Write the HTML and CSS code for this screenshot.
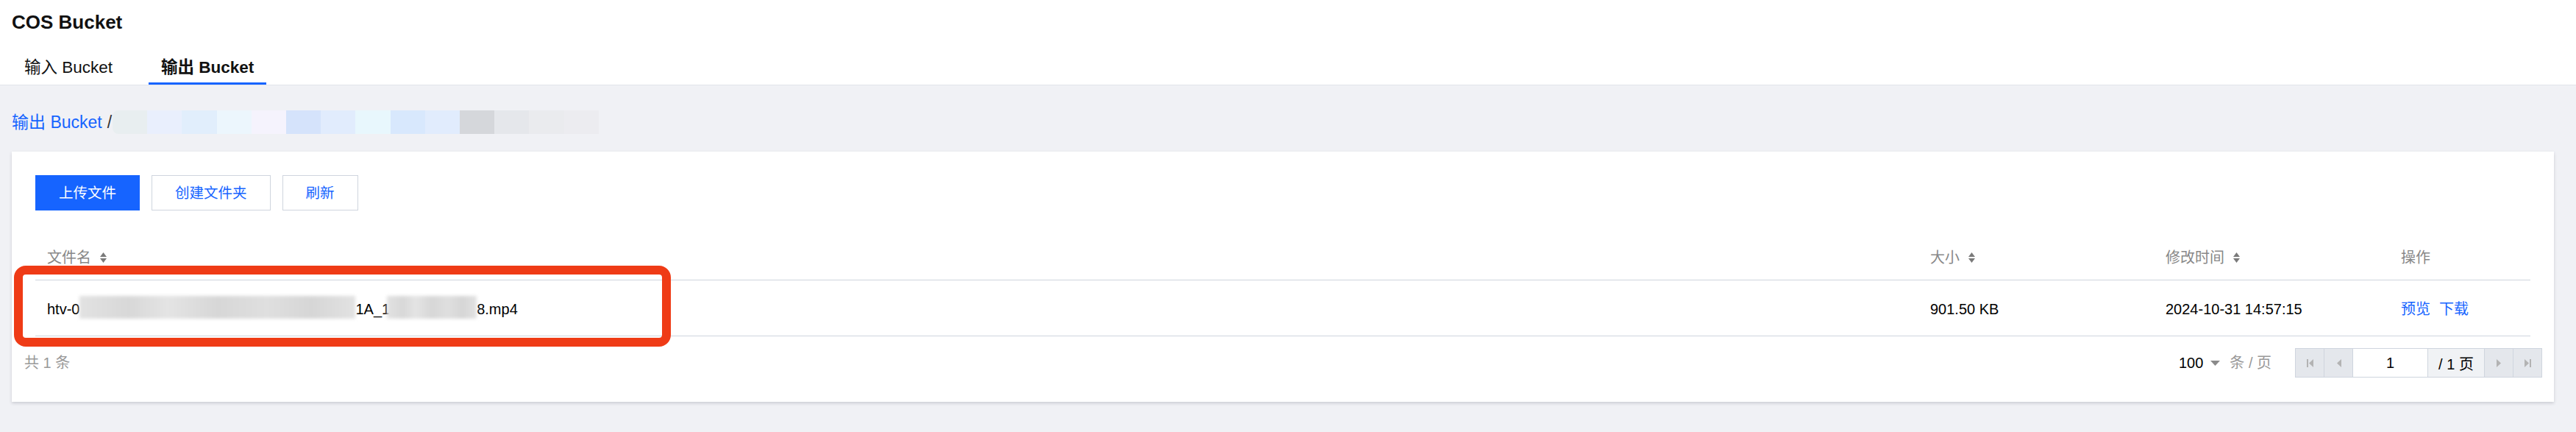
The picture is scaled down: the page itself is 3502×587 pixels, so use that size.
FILE: index.html
```html
<!DOCTYPE html>
<html lang="zh-CN">
<head>
<meta charset="utf-8">
<title>COS Bucket</title>
<link rel="stylesheet" href="styles.css">
</head>
<body>
<header class="page-header">
  <h1 class="title">COS Bucket</h1>
  <nav class="tabs">
    <a class="tab">输入 Bucket</a>
    <a class="tab tab-active">输出 Bucket</a>
  </nav>
</header>
<main class="main">
  <div class="crumb">
    <a class="crumb-link">输出 Bucket</a>
    <span class="crumb-sep">/</span>
    <span class="mosaic">
      <i class="m m1"></i><i class="m m2"></i><i class="m m3"></i><i class="m m4"></i><i class="m m5"></i><i class="m m6"></i><i class="m m7"></i><i class="m m8"></i><i class="m m9"></i><i class="m m10"></i><i class="m m11"></i><i class="m m12"></i><i class="m m13"></i><i class="m m14"></i>
    </span>
  </div>
  <section class="card">
    <div class="toolbar">
      <button class="btn btn-primary">上传文件</button>
      <button class="btn">创建文件夹</button>
      <button class="btn">刷新</button>
    </div>
    <div class="table">
      <div class="thead row-grid">
        <div class="th">文件名<svg class="sort" viewBox="0 0 9 14"><path d="M0 6L4.5 0L9 6Z M0 8L9 8L4.5 14Z"/></svg></div>
        <div class="th">大小<svg class="sort" viewBox="0 0 9 14"><path d="M0 6L4.5 0L9 6Z M0 8L9 8L4.5 14Z"/></svg></div>
        <div class="th">修改时间<svg class="sort" viewBox="0 0 9 14"><path d="M0 6L4.5 0L9 6Z M0 8L9 8L4.5 14Z"/></svg></div>
        <div class="th">操作</div>
      </div>
      <div class="tr row-grid">
        <div class="td name">htv-0<span class="redact redact-a"></span>1A_1<span class="redact redact-b"></span>8.mp4</div>
        <div class="td">901.50 KB</div>
        <div class="td">2024-10-31 14:57:15</div>
        <div class="td ops"><a class="op">预览</a><a class="op">下载</a></div>
        <div class="highlight"></div>
      </div>
    </div>
    <div class="footer">
      <span class="total">共 1 条</span>
      <div class="pager-wrap">
        <div class="page-size">
          <span>100</span>
          <svg class="caret" viewBox="0 0 13 7"><path d="M0 0H13L6.5 7Z"/></svg>
          <span class="unit">条 / 页</span>
        </div>
        <div class="pager">
          <span class="pg"><svg class="pg-ico" viewBox="0 0 9 11"><rect x="0" y="0" width="2" height="11"/><path d="M9 0V11L3 5.5Z"/></svg></span>
          <span class="pg"><svg class="pg-ico" viewBox="0 0 9 11"><path d="M8 0V11L2 5.5Z"/></svg></span>
          <span class="pg-input">1</span>
          <span class="pg-total">/ 1 页</span>
          <span class="pg"><svg class="pg-ico" viewBox="0 0 9 11"><path d="M1 0V11L7 5.5Z"/></svg></span>
          <span class="pg pg-last"><svg class="pg-ico" viewBox="0 0 9 11"><path d="M0 0V11L6 5.5Z"/><rect x="7" y="0" width="2" height="11"/></svg></span>
        </div>
      </div>
    </div>
  </section>
</main>
</body>
</html>
```

FILE: styles.css
```css
* { box-sizing: border-box; }
html, body { margin: 0; padding: 0; }
body {
  background: #f0f1f5;
  font-family: "Liberation Sans", "Noto Sans CJK SC", sans-serif;
  color: #000;
  width: 3502px;
  height: 587px;
  overflow: hidden;
}

.page-header {
  background: #fff;
  padding: 17px 0 0 16px;
  border-bottom: 1px solid #e2e4ea;
}
.title {
  margin: 0;
  font-size: 26px;
  line-height: 26px;
  font-weight: 700;
  color: #111;
}
.tabs {
  display: flex;
  gap: 32px;
  margin-top: 17px;
}
.tab {
  padding: 21px 17px 9px;
  font-size: 22.5px;
  line-height: 22px;
  color: #111;
  border-bottom: 3px solid transparent;
}
.tab-active {
  font-weight: 700;
  border-bottom-color: #1664ff;
}

.main {
  padding: 34px 30px 0 16px;
}
.crumb {
  display: flex;
  align-items: center;
  height: 32px;
  font-size: 23px;
  line-height: 23px;
  margin-bottom: 24px;
}
.crumb-link { color: #1664ff; }
.crumb-sep { margin-left: 7px; color: #333; }
.mosaic {
  display: flex;
  height: 32px;
  margin-left: 1px;
  filter: blur(0.6px);
}
.m { display: block; width: 47.2px; height: 32px; }
.m1 { background: #e8eef0; border-radius: 8px 0 0 8px; }
.m2 { background: #e9effd; }
.m3 { background: #e1eefc; }
.m4 { background: #ecf6fd; }
.m5 { background: #f5f3fd; }
.m6 { background: #d5e3fb; }
.m7 { background: #e1ecfd; }
.m8 { background: #e8f7fd; }
.m9 { background: #d8e8fd; }
.m10 { background: #e1ecfd; }
.m11 { background: #d5d7db; }
.m12 { background: #e5e7eb; }
.m13 { background: #eaebee; }
.m14 { background: #ececf0; }

.card {
  position: relative;
  background: #fff;
  padding: 32px 32px 33px;
  box-shadow: 0 2px 4px rgba(54, 58, 80, 0.2);
}
.toolbar {
  display: flex;
  gap: 16px;
  height: 48px;
}
.btn {
  height: 48px;
  padding: 0 31px;
  font-family: inherit;
  font-size: 19.5px;
  line-height: 46px;
  border: 1px solid #cfd5de;
  background: #fff;
  color: #1664ff;
  border-radius: 0;
}
.btn-primary {
  background: #1664ff;
  border-color: #1664ff;
  color: #fff;
}

.table { margin-top: 34px; }
.row-grid {
  display: grid;
  grid-template-columns: 1fr 320px 320px 192px;
  align-items: center;
}
.thead {
  height: 61px;
  border-bottom: 1px solid #cfd5de;
}
.th {
  display: flex;
  align-items: center;
  padding: 0 16px;
  color: #888;
  font-size: 20px;
  line-height: 20px;
}
.sort {
  width: 9px;
  height: 14px;
  margin-left: 12px;
  fill: #7a7a7a;
}
.tr {
  position: relative;
  height: 76px;
  padding-top: 3px;
  border-bottom: 1px solid #cfd5de;
}
.td {
  display: flex;
  align-items: center;
  padding: 0 16px;
  font-size: 20px;
  line-height: 20px;
  color: #000;
  white-space: nowrap;
}
.redact {
  display: block;
  height: 31px;
  margin-top: -5px;
  background: linear-gradient(90deg, #e2e2e2, #d8d8d8 18%, #e4e4e4 32%, #d7d7d7 50%, #dfdfdf 68%, #d6d6d6 84%, #e2e2e2);
  filter: blur(2px);
}
.redact-a { width: 375px; }
.redact-b { width: 122px; margin-left: -4px; }
.op { color: #1664ff; }
.op + .op { margin-left: 12px; }
.highlight {
  position: absolute;
  left: -29px;
  top: -20px;
  width: 893px;
  height: 110px;
  border: 12px solid #ef3b16;
  border-radius: 16px;
  pointer-events: none;
}

.footer {
  display: flex;
  justify-content: space-between;
  align-items: center;
  height: 40px;
  margin: 16px -16px 0 -15px;
}
.total {
  color: #999;
  font-size: 20px;
  line-height: 20px;
}
.pager-wrap {
  display: flex;
  align-items: center;
}
.page-size {
  display: flex;
  align-items: center;
  font-size: 20px;
  line-height: 20px;
}
.caret {
  width: 13px;
  height: 7px;
  margin: 0 13px 0 10px;
  fill: #8a8a8a;
}
.unit { color: #999; }
.pager {
  display: flex;
  height: 40px;
  margin-left: 32px;
  border: 1px solid #cfd5de;
}
.pg {
  display: flex;
  align-items: center;
  justify-content: center;
  width: 39px;
  background: #e4e7ec;
  border-right: 1px solid #cfd5de;
}
.pg-last { border-right: 0; width: 38px; }
.pg-ico {
  width: 9px;
  height: 11px;
  fill: #b3b3b3;
}
.pg-input {
  display: flex;
  align-items: center;
  justify-content: center;
  width: 102px;
  background: #fff;
  border-right: 1px solid #cfd5de;
  font-size: 20px;
}
.pg-total {
  display: flex;
  align-items: center;
  justify-content: center;
  width: 77px;
  background: #f0f2f5;
  border-right: 1px solid #cfd5de;
  font-size: 20px;
}
```
